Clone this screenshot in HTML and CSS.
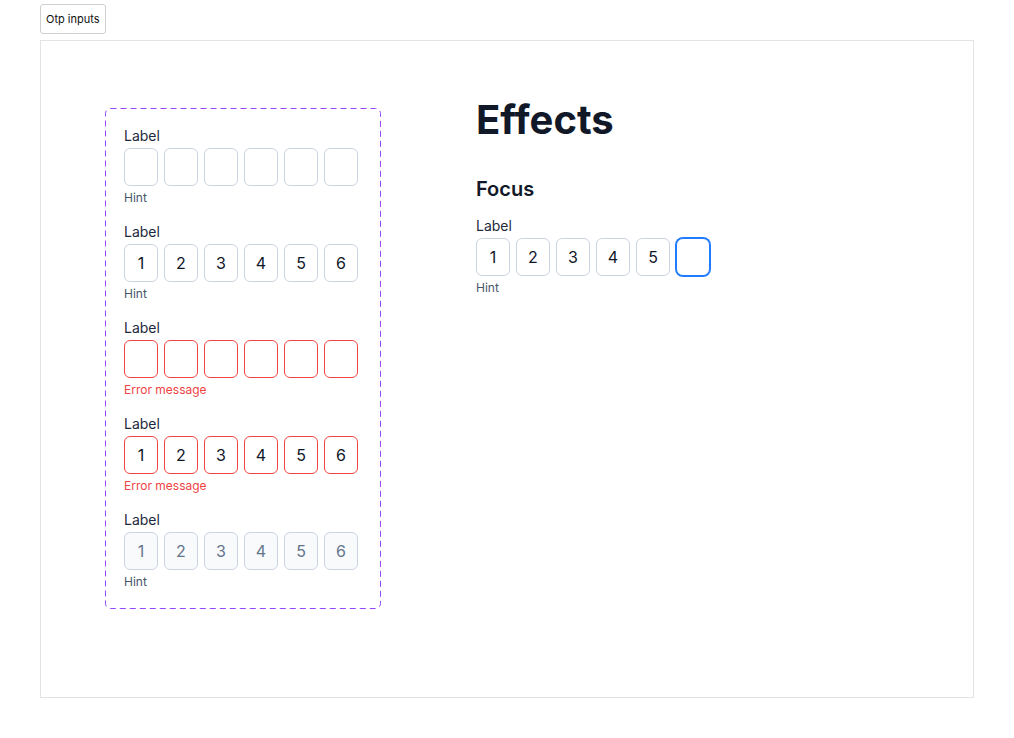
FILE: index.html
```html
<!DOCTYPE html>
<html>
<head>
<meta charset="utf-8">
<link rel="stylesheet" href="styles.css">
</head>
<body>
<button class="tab">Otp inputs</button>
<div class="frame">
  <div class="variants">
    <svg class="dash" aria-hidden="true"><rect class="dash-rect" x="0.5" y="0.5" rx="5" ry="5"></rect></svg>
    <div class="field">
      <div class="label">Label</div>
      <div class="cells">
        <div class="cell"></div><div class="cell"></div><div class="cell"></div><div class="cell"></div><div class="cell"></div><div class="cell"></div>
      </div>
      <div class="hint">Hint</div>
    </div>
    <div class="field">
      <div class="label">Label</div>
      <div class="cells">
        <div class="cell">1</div><div class="cell">2</div><div class="cell">3</div><div class="cell">4</div><div class="cell">5</div><div class="cell">6</div>
      </div>
      <div class="hint">Hint</div>
    </div>
    <div class="field error">
      <div class="label">Label</div>
      <div class="cells">
        <div class="cell"></div><div class="cell"></div><div class="cell"></div><div class="cell"></div><div class="cell"></div><div class="cell"></div>
      </div>
      <div class="hint">Error message</div>
    </div>
    <div class="field error">
      <div class="label">Label</div>
      <div class="cells">
        <div class="cell">1</div><div class="cell">2</div><div class="cell">3</div><div class="cell">4</div><div class="cell">5</div><div class="cell">6</div>
      </div>
      <div class="hint">Error message</div>
    </div>
    <div class="field disabled">
      <div class="label">Label</div>
      <div class="cells">
        <div class="cell">1</div><div class="cell">2</div><div class="cell">3</div><div class="cell">4</div><div class="cell">5</div><div class="cell">6</div>
      </div>
      <div class="hint">Hint</div>
    </div>
  </div>
  <div class="effects">
    <h1 class="title">Effects</h1>
    <h2 class="subtitle">Focus</h2>
    <div class="field">
      <div class="label">Label</div>
      <div class="cells">
        <div class="cell">1</div><div class="cell">2</div><div class="cell">3</div><div class="cell">4</div><div class="cell">5</div><div class="cell focus"></div>
      </div>
      <div class="hint">Hint</div>
    </div>
  </div>
</div>
</body>
</html>
```

FILE: styles.css
```css
* { box-sizing: border-box; }
html, body { margin: 0; background: #fff; }
body {
  padding: 4px 40px 0 40px;
  font-family: Inter, "Liberation Sans", sans-serif;
  color: #0f172a;
}
.tab {
  display: block;
  height: 30px;
  padding: 0 5px;
  font-family: Inter, "Liberation Sans", sans-serif;
  font-size: 11px;
  color: #111;
  background: #fff;
  border: 1px solid #cfcfcf;
  border-radius: 3px;
  margin: 0 0 6px 0;
}
.frame {
  width: 934px;
  height: 658px;
  border: 1px solid #e3e3e3;
  display: flex;
  align-items: flex-start;
  padding: 55px 0 0 64px;
  gap: 95px;
}
.variants {
  position: relative;
  margin-top: 12px;
  width: 276px;
  border-radius: 5px;
  padding: 18px 23px 19px 19px;
  display: flex;
  flex-direction: column;
  gap: 16px;
}
.dash {
  position: absolute;
  left: 0;
  top: 0;
  width: 100%;
  height: 100%;
  overflow: visible;
  pointer-events: none;
}
.dash-rect {
  width: calc(100% - 1px);
  height: calc(100% - 1px);
  fill: none;
  stroke: #9747ff;
  stroke-width: 1;
  stroke-dasharray: 6 4;
}
.field { display: flex; flex-direction: column; }
.label {
  font-size: 14px;
  line-height: 20px;
  color: #1e293b;
  margin-bottom: 2px;
}
.cells { display: flex; gap: 6px; }
.cell {
  width: 34px;
  height: 38px;
  border: 1px solid #cbd5e1;
  border-radius: 6px;
  display: flex;
  align-items: center;
  justify-content: center;
  font-size: 16px;
  color: #0f172a;
  background: #fff;
}
.hint {
  margin-top: 4px;
  font-size: 12px;
  line-height: 16px;
  color: #475569;
}
.error .cell { border-color: #ef4444; }
.error .hint { color: #ef4444; }
.disabled .cell { background: #f8fafc; color: #64748b; }
.effects { display: flex; flex-direction: column; }
.title {
  margin: 0;
  font-size: 40px;
  line-height: 48px;
  font-weight: 700;
  color: #111827;
}
.subtitle {
  margin: 31px 0 13px 0;
  font-size: 20px;
  line-height: 28px;
  font-weight: 600;
  color: #111827;
}
.cell.focus {
  border-color: #1f7bff;
  box-shadow: 0 0 0 1px #1f7bff;
  border-radius: 7px;
}
```
